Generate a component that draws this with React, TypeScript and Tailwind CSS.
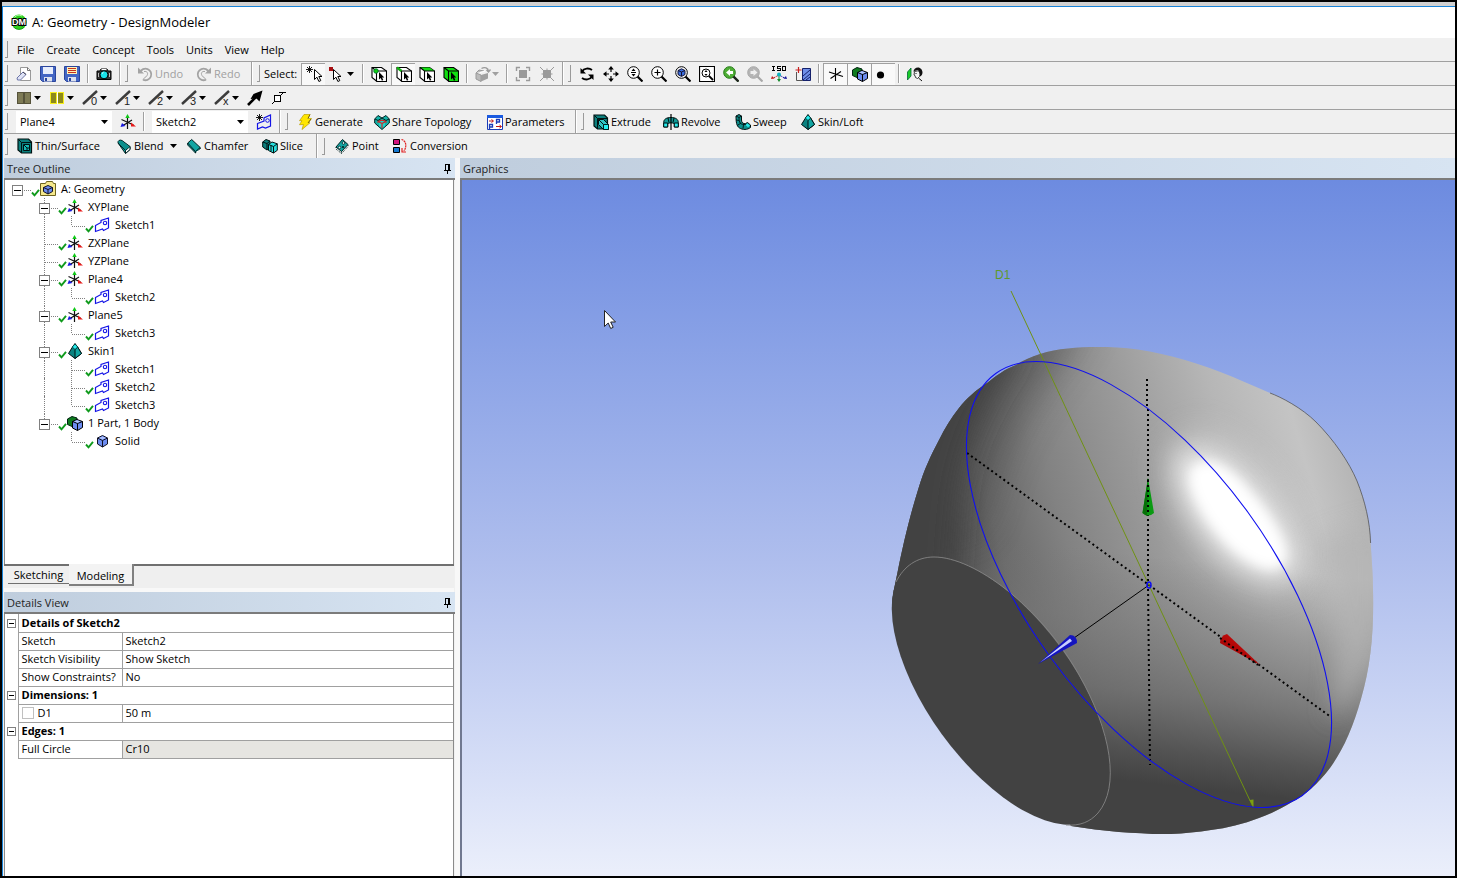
import React from "react";

type Kids = { children?: React.ReactNode };

/* ---------- drawing helpers ---------- */

function Ic({ children, w = 16, h = 16, crisp = false }: Kids & { w?: number; h?: number; crisp?: boolean }) {
  return (
    <svg
      width={w}
      height={h}
      viewBox={`0 0 ${w} ${h}`}
      fill="none"
      shapeRendering={crisp ? "crispEdges" : "auto"}
      className="block shrink-0"
      aria-hidden="true"
    >
      {children}
    </svg>
  );
}

const Caret = ({ color = "#000" }: { color?: string }) => (
  <svg width="7" height="4" viewBox="0 0 7 4" className="block shrink-0" aria-hidden="true">
    <path d="M0 0h7L3.5 4z" fill={color} />
  </svg>
);

const Logo = () => (
  <Ic>
    <circle cx="8" cy="8" r="7.600" fill="#2fd01f" />
    <path d="M2.500 13a7.500 7.500 0 0 0 11 0" stroke="#12a012" />
    <path d="M3.500 3.500A6 6 0 0 1 11 2" stroke="#b8f7b0" />
    <text
      x="8"
      y="11"
      textAnchor="middle"
      fontSize="9"
      fontWeight="bold"
      fontFamily="Liberation Sans, sans-serif"
      fill="#fff"
      stroke="#000"
      strokeWidth="2"
      paintOrder="stroke"
    >
      DM
    </text>
  </Ic>
);

const NewIcon = () => (
  <Ic>
    <path d="M4.500 1.500h7l3 3v10h-10z" fill="#fff" stroke="#999" />
    <path d="M11.500 1.500v3h3" stroke="#777" />
    <path d="M1 12l6-6 3 2.500-5.500 5.500H1.500z" fill="#dfe3f5" stroke="#6b74a8" />
    <path d="M7 6l3 2.500" stroke="#445" />
  </Ic>
);
const SaveIcon = ({ red = false }: { red?: boolean }) => (
  <Ic>
    <path d="M.5.5h15v15h-13l-2-2z" fill="#4466c4" stroke="#2a459c" />
    <path d="M3 1h10v7H3z" fill={red ? "#fff3b8" : "#e8eefc"} />
    {red && <path d="M4 2.500h8M4 4.500h8M4 6.500h8" stroke="#c8321e" />}
    <path d="M4 11h8v4.500H4z" fill="#dde2ee" />
    <path d="M5 12h2v3H5z" fill="#2a459c" />
  </Ic>
);
const CameraIcon = () => (
  <Ic>
    <path d="M1 5h3l1-2h6l1 2h3v8.500H1z" fill="#333" stroke="#000" />
    <path d="M5.500 3.500h5" stroke="#fff" />
    <path d="M2.500 7v4M13.500 7v4" stroke="#bbb" />
    <circle cx="8" cy="8.800" r="4" fill="#19e3ea" stroke="#000" />
    <path d="M6 7.500l1.500-1.200" stroke="#fff" />
  </Ic>
);
const UndoIcon = ({ flip = false }: { flip?: boolean }) => (
  <Ic>
    <g transform={flip ? "matrix(-1 0 0 1 16 0)" : undefined} stroke="#a3a3a3">
      <path d="M3 6.500A5.800 5.800 0 1 1 6 13.700" strokeWidth="1.800" />
      <path d="M1 1.500V7.500H7z" fill="#a3a3a3" stroke="none" />
      <path d="M7 5.500c3-.5 4.500 1.500 3 4s-3 2-4 4" strokeWidth="1" />
    </g>
  </Ic>
);
const Pointer = ({ x = 0, y = 0 }: { x?: number; y?: number }) => (
  <path transform={`translate(${x} ${y})`} d="M.5.5v10l2.400-2.300 2 4.300 1.900-.9-2-4.100h3.200z" fill="#fff" stroke="#000" />
);
const SelectNew = () => (
  <Ic>
    <path d="M3.500 0v7M0 3.500h7M1 1l5 5M6 1L1 6" stroke="#000" strokeWidth=".9" />
    <Pointer x={8} y={3} />
  </Ic>
);
const SelectMode = () => (
  <Ic>
    <path d="M0 1h4v4H0z" fill="#a80f12" />
    <Pointer x={4} y={3} />
  </Ic>
);
const CubeSelect = ({ kind }: { kind: "vertex" | "edge" | "face" | "body" }) => (
  <Ic>
    <path d="M1 1.500h9.500l5 3.500v10.500H6L1 11.500z" fill={kind === "body" ? "#12dd12" : "#fff"} stroke="#000" strokeWidth="1.100" />
    {kind === "face" && <path d="M1 1.500h9.500L15.500 5H5.500z" fill="#12dd12" />}
    <path d="M1 1.500L5.500 5h10M5.500 5v10.500" stroke="#000" strokeWidth="1.100" />
    {kind === "edge" && <path d="M1 1.500L5.500 5" stroke="#12b012" strokeWidth="2.500" />}
    {kind === "vertex" && <circle cx="5" cy="5" r="2.300" fill="#12cc12" stroke="#063" strokeWidth=".8" />}
    <path d="M8 6v7.500l1.700-1.500 1.200 2.700 1.400-.6-1.200-2.600h2.200z" fill="#000" />
  </Ic>
);
const GreyCube = () => (
  <Ic>
    <path d="M1 7l3-3 5 1M1 7v6l5 2.500V9z" fill="#bbb" stroke="#9a9a9a" />
    <path d="M6 9l7-2v5.500l-7 3z" fill="#a0a0a0" />
    <path d="M5 6.500l5-1.500" stroke="#fff" />
    <path d="M6.500 2.500c3-2 7-.5 7 3M11.500 4l2 2 2-2.500" stroke="#9a9a9a" strokeWidth="1.300" />
  </Ic>
);
const GreyBox = ({ cross = false }: { cross?: boolean }) => (
  <Ic>
    <path d="M4 4h8v8H4z" fill="#9a9a9a" />
    {cross ? (
      <path d="M1 1l4 4M15 1l-4 4M1 15l4-4M15 15l-4-4M2.500 8h11M8 2.500v11" stroke="#9a9a9a" />
    ) : (
      <path d="M1.500 5V1.500H5M11 1.500h3.500V5M14.500 11v3.500H11M5 14.500H1.500V11" stroke="#9a9a9a" strokeWidth="1.400" />
    )}
  </Ic>
);
const RotateIcon = () => (
  <Ic>
    <path d="M3 5.500C5 2 10 1.800 13 4M13 10.500c-2 3.500-7 3.700-10 1.500" stroke="#000" strokeWidth="1.900" />
    <path d="M1.500 2v5.500H7zM14.500 14V8.500H9z" fill="#000" />
  </Ic>
);
const PanIcon = () => (
  <Ic>
    <path d="M8 2v4M8 10v4M2 8h4M10 8h4" stroke="#000" strokeWidth="1.200" />
    <path d="M8 0l2.800 3.500H5.200zM8 16l2.800-3.500H5.200zM0 8l3.500-2.800v5.600zM16 8l-3.500-2.800v5.600z" fill="#000" />
  </Ic>
);
const Lens = ({ children, ring = "#000", fill = "#fff" }: Kids & { ring?: string; fill?: string }) => (
  <Ic>
    <path d="M10.500 10.500l5 5" stroke={ring} strokeWidth="2.200" />
    <circle cx="6.500" cy="6.500" r="5.800" fill={fill} stroke={ring} strokeWidth="1" />
    {children}
  </Ic>
);
const ZoomIcon = () => (
  <Lens>
    <path d="M6.500 2.500l2 2.500h-4zM6.500 10.500l2-2.500h-4z" fill="#000" />
    <path d="M4 6.500h5" stroke="#000" />
  </Lens>
);
const ZoomInIcon = () => (
  <Lens>
    <path d="M6.500 3.500v6M3.500 6.500h6" stroke="#000" strokeWidth="1.200" />
  </Lens>
);
const ZoomFitIcon = () => (
  <Lens>
    <path d="M3 4.500l3.500-1.700L10 4.500v4l-3.500 2L3 8.500z" fill="#3c6fe0" stroke="#113" />
    <path d="M3 4.500L6.500 6 10 4.500M6.500 6v4" stroke="#113" />
  </Lens>
);
const ZoomBoxIcon = () => (
  <Ic>
    <path d="M.5.5h15v15H.5z" fill="#fff" stroke="#000" strokeWidth="1.200" />
    <circle cx="7" cy="7" r="4" stroke="#000" />
    <path d="M10 10l4 4" stroke="#000" strokeWidth="1.800" />
    <path d="M7 4l1.500 2h-3zM7 10l1.500-2h-3z" fill="#000" />
  </Ic>
);
const PrevIcon = () => (
  <Lens ring="#217a12" fill="#4fae36">
    <path d="M10.500 10.500l5 5" stroke="#222" strokeWidth="2.200" />
    <path d="M3 6.500l4-3.500v2h3v3H7v2z" fill="#fff" />
  </Lens>
);
const NextIcon = () => (
  <Lens ring="#a8a8a8" fill="#b4b4b4">
    <path d="M10.500 6.500L6.500 3v2h-3v3h3v2z" fill="#eee" />
  </Lens>
);
const IsoIcon = () => (
  <Ic>
    <path
      d="M1 .5h3M2.500 .5v4M1 4.500h3M9.500 .5h-3v2h2.500v2H6M11.500 .5h3v4h-3z"
      stroke="#000"
      shapeRendering="crispEdges"
    />
    <path d="M8 9v5" stroke="#158a2a" />
    <path d="M6 13h4l-2 3z" fill="#158a2a" />
    <path d="M7 9.500L2.500 12" stroke="#c01818" strokeDasharray="2 1" />
    <path d="M0 13l1-3 2.500 2.500z" fill="#c01818" />
    <path d="M9 9.500l4.500 2.500" stroke="#14149c" strokeDasharray="2 1" />
    <path d="M16 13l-1-3-2.500 2.500z" fill="#14149c" />
    <circle cx="8" cy="8.500" r="2" fill="#0fb5c0" />
  </Ic>
);
const LookAtPlane = () => (
  <Ic>
    <path d="M7.500 2.500h8v12h-8z" fill="#6f8fe8" stroke="#15206b" />
    <path d="M8 10l7-6M8 14l7-6M11 14l4-3" stroke="#15206b" />
    <path d="M1.500 6v8.500h6" stroke="#555" />
    <path d="M3.500 1v6M.5 4h6" stroke="#c81e1e" strokeWidth="1.200" />
  </Ic>
);
const AxesMono = () => (
  <Ic>
    <path d="M7.500 2v13M1 6l14 4.500M2.500 12.500L13 5.500" stroke="#000" strokeWidth="1.100" />
  </Ic>
);
const PartBody = () => (
  <Ic>
    <path d="M.5 4L5 1.500l5 1.500v6L5 11.500l-4.500-2z" fill="#0e7a1e" stroke="#021" />
    <path d="M5.500 6.500L10 4.500l5.500 2v6l-5 3-5-2.500z" fill="#6c8cf0" stroke="#000" />
    <path d="M5.500 6.500l5 2 5-2M10.500 8.500v7" stroke="#000" />
    <path d="M7 6.300L10 5.200l3.500 1.300-3 1.200z" fill="#b4c8ff" />
  </Ic>
);
const DotIcon = () => (
  <Ic>
    <circle cx="4.500" cy="9" r="3.600" fill="#000" />
  </Ic>
);
const LookAt = () => (
  <Ic>
    <path d="M.5 6L4 2v8L.5 14z" fill="#18cc28" stroke="#063" strokeWidth=".8" />
    <path d="M6.500 6c0-3 2-4.500 4.500-4.500S15.500 4 15.500 6.500 14 10 13 10.500L11 4 7.500 5z" fill="#111" />
    <path d="M7.500 5.500c2 0 3-1 4-.5s2 3 1 5.500l-2 2-2-1-.5-2-1-.5z" fill="#f5f5f5" stroke="#111" strokeWidth=".8" />
    <path d="M8.500 7.500h1M11.500 12l3.500 3" stroke="#111" />
  </Ic>
);

/* edge colouring row */
const Blocks = ({ lit = false }: { lit?: boolean }) => (
  <Ic crisp>
    <path d="M1 2h14v12H1z" fill={lit ? "#f7ef18" : "#55523a"} />
    <path d="M2 3h5v10H2zM9 3h5v10H9z" fill={lit ? "#8d8a1c" : "#7d7a55"} />
    {lit && <path d="M8 2v12" stroke="#fff" />}
  </Ic>
);
const EdgeLine = ({ tag }: { tag: string }) => (
  <Ic>
    <path d="M1 14L15 1" stroke="#3c3c3c" strokeWidth="2.400" />
    <text x="9" y="15" fontSize="11" fontFamily="Liberation Sans, sans-serif" fill="#222">
      {tag}
    </text>
  </Ic>
);
const ThickArrow = () => (
  <Ic>
    <path d="M1 15L11 5" stroke="#000" strokeWidth="2.600" />
    <path d="M15.500 .5l-3 11L9.500 8.500 3.500 9 6.500 4z" fill="#000" />
  </Ic>
);
const BoxLine = () => (
  <Ic crisp>
    <path d="M3.500 5.500h6v6h-6z" stroke="#000" fill="#fff" />
    <path d="M9 6l4-4M8 2.500h7M1 14l3-3" stroke="#000" />
  </Ic>
);

/* feature icons */
const PlaneAxes = () => (
  <Ic>
    <path d="M7.500 3v12M1.500 5.500l12 5.500M3 11.500L12 6" stroke="#111" strokeWidth="1.200" />
    <path d="M7.500 0l2.200 4H5.300z" fill="#10c818" />
    <path d="M11 8.500l5 4h-5z" fill="#e81818" />
    <path d="M.5 13l1.500-4 3.500 3z" fill="#1818e0" />
  </Ic>
);
const SketchIcon = () => (
  <Ic>
    <path d="M1.500 8.500L7 5.500V3.500l7.500-2.500v10l-5 2.500-1-1.500-7 2.500z" stroke="#1414e6" strokeWidth="1.200" />
    <circle cx="11" cy="6" r="1.700" stroke="#1414e6" strokeWidth="1.100" />
  </Ic>
);
const NewSketchIcon = () => (
  <Ic>
    <path d="M1.500 9.500L8 7V4l6.500-3v11l-5 2-3-1-5 2z" stroke="#1414e6" strokeWidth="1.200" />
    <circle cx="11.500" cy="6.500" r="1.800" stroke="#1414e6" />
    <path d="M3.500 0v7M0 3.500h7M1 1l5 5M6 1L1 6" stroke="#000" strokeWidth=".9" />
  </Ic>
);
const Bolt = () => (
  <Ic>
    <path d="M7 .5l6-.2-2 4 3.500.2-3 4 1.500.3L5 15.500l1.500-5-4 .2 2.500-4H2.500z" fill="#ffe600" stroke="#b89c00" strokeWidth=".7" />
    <path d="M13 .5l-2 4M14 5l-3 4" stroke="#665500" strokeWidth=".8" />
  </Ic>
);
const ShareIcon = () => (
  <Ic>
    <path d="M.7 5L4 1.500 8 4l4-2.500L15.300 5v4L8 15.500.7 9z" fill="#13b3a8" stroke="#022" />
    <path d="M1 5l3 1.500L8 4l4 2.500L15 5" stroke="#022" />
    <path d="M5 8l3-1.500L11 8v4l-3 2-3-2z" fill="#1fd5cc" />
    <path d="M3.500 8.500C5 5.500 11 5.500 12.500 8.500M5 8l3 1.500L11 8M8 9.500V14" stroke="#e01818" strokeWidth="1.100" />
  </Ic>
);
const ParamIcon = () => (
  <Ic>
    <path d="M.5 1.500h15v14H.5z" fill="#fff" stroke="#1a3cb8" />
    <path d="M0 1h16v3H0z" fill="#1a5ae0" />
    <path d="M2 7h4M4.500 5.500L6.500 7 4.500 8.500M9 12.500h5M12.500 11l2 1.500-2 1.500" stroke="#c01818" />
    <path d="M9.500 10V5.500h3v2.500h-3M2.500 15v-4.500h3V13h-3" stroke="#1a3cb8" strokeWidth="1.300" />
  </Ic>
);
const ExtrudeIcon = ({ thin = false }: { thin?: boolean }) => (
  <Ic>
    <path d="M1 1h10.500l3 3v11H4.500L1 12z" fill="#0b7f7d" stroke="#011" strokeWidth="1.200" />
    <path d="M4.500 4.500h10v10.500" stroke="#011" />
    <path d="M1.500 1.500l3 3V15" stroke="#011" />
    {thin ? (
      <g>
        <path d="M6.500 6.500h6v6h-6z" fill="#13b9b5" stroke="#011" />
        <path d="M7 7l3 3h2.500M10 10v2.500" stroke="#011" />
      </g>
    ) : (
      <g>
        <path d="M5.500 5.500h5l5 5v5h-5l-5-5z" fill="#2fc4c4" stroke="#011" />
        <path d="M10.500 10.500h5v5h-5z" fill="#24f2f2" stroke="#022" />
        <path d="M5.500 5.500l5 5" stroke="#011" />
      </g>
    )}
  </Ic>
);
const RevolveIcon = () => (
  <Ic>
    <path d="M.7 8.500c0-3.500 3-5 7.300-5s7.300 1.500 7.300 5V13h-4v-3c0-1.500-6.600-1.500-6.600 0v3h-4z" fill="#109b98" stroke="#011" />
    <path d="M.7 9h4v4h-4zM11.300 9h4v4h-4z" fill="#27ecec" stroke="#011" />
    <path d="M5 4l1 4.500M11 4l-1 4.500" stroke="#011" />
    <path d="M8 0v16" stroke="#000" strokeWidth="1.200" />
  </Ic>
);
const SweepIcon = () => (
  <Ic>
    <path d="M1 2l3-1.500L6.500 2v4c0 3 2 4 4 3.500l2-1 3 2.500v2.500c-3 2.500-8 2.500-11 .5S1 8 1 2z" fill="#0d8f8c" stroke="#011" />
    <path d="M1 2l3 1.500L6.500 2M4 3.500c0 5 1 7.500 7 7M1.200 6l3 .5M3 11l3-2M8 14.500l.5-4" stroke="#011" strokeWidth=".9" />
    <path d="M10.500 11l2-1.500 2.500 2-2 1.800z" fill="#27ecec" />
  </Ic>
);
const SkinIcon = () => (
  <Ic>
    <path d="M8 .5l2.500 3.500 4 6.500L8 15.500l-6.500-5L5.500 4z" fill="#0b8280" stroke="#011" />
    <path d="M8 6.500L10.700 4l3.800 6.500L8 15.500z" fill="#12a5a2" stroke="#011" />
    <path d="M8 1l2.700 3L8 6.500 5.300 4z" fill="#27f0f0" stroke="#033" strokeWidth=".8" />
  </Ic>
);
const BlendIcon = () => (
  <Ic>
    <path d="M2 5C1.500 2.500 4 1.500 6 2.500L14 8.500v3L9.500 15.500z" fill="#12a5a2" stroke="#022" />
    <path d="M9.500 15.500V12.500L14 8.500v3z" fill="#fff" stroke="#022" />
    <path d="M2.200 5L9.500 12.500" stroke="#022" />
    <path d="M3 4l2-1.200 8.300 6-4 3z" fill="#0d8e8b" />
  </Ic>
);
const ChamferIcon = () => (
  <Ic>
    <path d="M1.700 5l4-3.500 8.500 8v1.500L9.500 15 1.700 7z" fill="#12a5a2" stroke="#022" />
    <path d="M1.700 5l7.800 8.500 4.700-4M9.500 13.500V15" stroke="#022" />
    <path d="M10 14.500l4.500-3" stroke="#fff" />
  </Ic>
);
const SliceIcon = () => (
  <Ic>
    <path d="M.7 4L4 1.500l4 1.500v7l-3 2-4.300-3z" fill="#0b7f7d" stroke="#011" />
    <path d="M.7 4L5 5.500 8 3M5 5.500V12" stroke="#011" />
    <path d="M6.500 6.500L10 4l5.300 1.800v6.500L11.500 15l-5-2.500z" fill="#27dede" stroke="#011" />
    <path d="M6.500 6.500l5 2 3.800-2.700M11.500 8.500V15M9 7.500v6" stroke="#011" />
  </Ic>
);
const PointIcon = () => (
  <Ic>
    <path d="M2 9L8.500 1.500 14 6.500 7.500 13.500z" fill="#12a5a2" stroke="#022" />
    <path d="M2 9v2l5.500 4.500v-2M7.500 15.500L14 8.500v-2" stroke="#022" strokeDasharray="1 1" />
    <circle cx="9.500" cy="5" r="1.300" fill="#e8ffff" stroke="#022" strokeWidth=".8" />
    <circle cx="5.500" cy="9.500" r="1.300" fill="#e8ffff" stroke="#022" strokeWidth=".8" />
    <circle cx="9" cy="9" r="1.100" fill="#022" />
  </Ic>
);
const ConversionIcon = () => (
  <Ic>
    <path d="M1.500 1.500h6v5h-6z" fill="#d0147c" stroke="#000" />
    <path d="M1.500 9.500h6v5h-6z" fill="#1478d0" stroke="#000" />
    <path d="M9.500 1.500c4 1 6 6 2.500 11.500" stroke="#e02020" strokeWidth="1.200" strokeDasharray="2 .6" />
    <path d="M10 10v4h4" stroke="#e02020" strokeWidth="1.200" />
  </Ic>
);

/* tree icons */
const FolderCube = () => (
  <Ic>
    <path d="M.5 2.500h5l1-2h6l1 2h2v12H.5z" fill="#f5e88c" stroke="#6e6420" />
    <path d="M3.500 6.500L8 4.500l4.500 2v4L8 13l-4.500-2.500z" fill="#6c8cf0" stroke="#112" />
    <path d="M3.500 6.500L8 8.500l4.500-2M8 8.500V13" stroke="#112" />
  </Ic>
);
const SolidCube = () => (
  <Ic>
    <path d="M3.500 5l5-2.500 5 2.500v6l-5 3-5-3z" fill="#6c8cf0" stroke="#112" />
    <path d="M3.500 5l5 2.500 5-2.500M8.500 7.500V14" stroke="#112" />
    <path d="M5 5l3.500-1.500L12 5 8.500 6.500z" fill="#a9bfff" />
  </Ic>
);
const Check = () => (
  <svg width="9" height="18" viewBox="0 0 9 18" className="block shrink-0" aria-hidden="true">
    <path d="M1 12.500l2.500 2.800L8 9.800" stroke="#0f9a1c" strokeWidth="1.900" fill="none" />
  </svg>
);
const Pin = () => (
  <Ic w={9} h={10} crisp>
    <path d="M2.500 6V.5h4V6M5.500 1v5M1 6.500h7M4.500 7v3" stroke="#000" />
  </Ic>
);

/* ---------- toolbar parts ---------- */

const Grip = () => (
  <span className="flex w-2 shrink-0 items-center pl-px">
    <span className="h-[17px] w-[3px] border-r border-b border-[#9a9a9a]" />
  </span>
);
const Sep = () => (
  <span className="flex w-2 shrink-0 justify-center py-[2px]">
    <span className="w-[2px] border-l border-[#a0a0a0] bg-white" />
  </span>
);
const GroupEnd = () => (
  <span className="flex w-2 shrink-0 justify-center">
    <span className="w-[2px] border-l border-[#a0a0a0] bg-white" />
  </span>
);
function Tool({
  label,
  children,
  pressed = false,
  drop = false,
  width = "w-6",
}: Kids & { label: string; pressed?: boolean; drop?: boolean; width?: string }) {
  return (
    <button
      type="button"
      aria-label={label}
      aria-pressed={pressed || undefined}
      className={`flex h-[22px] shrink-0 items-center gap-[2px] self-center ${drop ? "justify-start pl-1" : "justify-center"} ${width} ${
        pressed ? "border-t border-l border-[#a0a0a0] bg-[#f9f9f9]" : ""
      }`}
    >
      {children}
      {drop && <Caret />}
    </button>
  );
}
function Labeled({
  icon,
  children,
  width,
  disabled = false,
  drop = false,
}: Kids & { icon: React.ReactNode; width: string; disabled?: boolean; drop?: boolean }) {
  return (
    <button
      type="button"
      disabled={disabled}
      className={`flex shrink-0 items-center gap-[2px] pl-[5px] ${width} ${disabled ? "text-[#a0a0a0]" : ""}`}
    >
      {icon}
      <span className="whitespace-nowrap">{children}</span>
      {drop && (
        <span className="pl-1">
          <Caret />
        </span>
      )}
    </button>
  );
}
function Combo({ label, value }: { label: string; value: string }) {
  return (
    <span className="relative flex h-[22px] w-24 shrink-0 items-center self-center bg-white">
      <select
        aria-label={label}
        className="h-[22px] w-full appearance-none bg-transparent pt-px pl-1 text-[11px] leading-4 outline-none"
        defaultValue={value}
      >
        <option>{value}</option>
      </select>
      <span className="pointer-events-none absolute right-1">
        <Caret />
      </span>
    </span>
  );
}
const Bar = ({ children, last = false }: Kids & { last?: boolean }) => (
  <div role="toolbar" className={`flex h-6 shrink-0 bg-[#f0f0f0] ${last ? "" : "border-b border-[#a0a0a0]"}`}>
    {children}
  </div>
);

/* ---------- tree ---------- */

type Node = { level: number; text: string; icon: React.ReactNode; open?: boolean; end?: boolean; trunk?: boolean };

const nodes: Node[] = [
  { level: 0, text: "A: Geometry", icon: <FolderCube />, open: true },
  { level: 1, text: "XYPlane", icon: <PlaneAxes />, open: true },
  { level: 2, text: "Sketch1", icon: <SketchIcon />, end: true, trunk: true },
  { level: 1, text: "ZXPlane", icon: <PlaneAxes /> },
  { level: 1, text: "YZPlane", icon: <PlaneAxes /> },
  { level: 1, text: "Plane4", icon: <PlaneAxes />, open: true },
  { level: 2, text: "Sketch2", icon: <SketchIcon />, end: true, trunk: true },
  { level: 1, text: "Plane5", icon: <PlaneAxes />, open: true },
  { level: 2, text: "Sketch3", icon: <SketchIcon />, end: true, trunk: true },
  { level: 1, text: "Skin1", icon: <SkinIcon />, open: true },
  { level: 2, text: "Sketch1", icon: <SketchIcon />, trunk: true },
  { level: 2, text: "Sketch2", icon: <SketchIcon />, trunk: true },
  { level: 2, text: "Sketch3", icon: <SketchIcon />, end: true, trunk: true },
  { level: 1, text: "1 Part, 1 Body", icon: <PartBody />, open: true, end: true },
  { level: 2, text: "Solid", icon: <SolidCube />, end: true },
];

const ExpandBox = ({ name, small = false }: { name: string; small?: boolean }) => (
  <button
    type="button"
    aria-label={`Collapse ${name}`}
    className={`flex items-center justify-center border border-[#808080] bg-white ${small ? "size-[9px]" : "size-[11px]"}`}
  >
    <span className={`h-px bg-black ${small ? "w-[5px]" : "w-[7px]"}`} />
  </button>
);

function TreeRow({ node }: { node: Node }) {
  const { level, text, icon, open, end, trunk } = node;
  return (
    <li className="flex h-[18px] items-center">
      <span className={`flex h-full shrink-0 ${level === 0 ? "w-[7px]" : level === 1 ? "w-[34px]" : "w-[61px]"}`}>
        {level === 2 && trunk && <span className="ml-[39px] h-full w-px border-l border-dotted border-[#808080]" />}
      </span>
      <span className="grid h-full w-[19px] shrink-0 items-center">
        <svg width="19" height="18" className="block [grid-area:1/1]" shapeRendering="crispEdges" aria-hidden="true">
          <path
            d={`${level === 0 ? "" : `M5.500 0V${end ? 10 : 18}`}M5.500 10.500H19`}
            stroke="#808080"
            strokeDasharray="1 1"
            fill="none"
          />
        </svg>
        {open && (
          <span className="pt-[2px] [grid-area:1/1]">
            <ExpandBox name={text} />
          </span>
        )}
      </span>
      <Check />
      {icon}
      <span className="pl-[5px] whitespace-nowrap">{text}</span>
    </li>
  );
}

/* ---------- details ---------- */

type Detail = { group?: string; name?: string; value?: string; box?: boolean; readOnly?: boolean };
const details: Detail[] = [
  { group: "Details of Sketch2" },
  { name: "Sketch", value: "Sketch2" },
  { name: "Sketch Visibility", value: "Show Sketch" },
  { name: "Show Constraints?", value: "No" },
  { group: "Dimensions: 1" },
  { name: "D1", value: "50 m", box: true },
  { group: "Edges: 1" },
  { name: "Full Circle", value: "Cr10", readOnly: true },
];

const PanelTitle = ({ children, pin = false }: Kids & { pin?: boolean }) => (
  <div className="flex h-[22px] shrink-0 items-center justify-between border-b-2 border-[#7b7b7b] bg-linear-to-r from-[#bfcddd] to-[#d7e4f2] pt-[2px] pr-[3px] pl-[3px] text-[11px] text-[#1e1e1e]">
    <h2>{children}</h2>
    {pin && (
      <button type="button" aria-label="Auto hide">
        <Pin />
      </button>
    )}
  </div>
);

/* ---------- 3D view ---------- */

const RIM = "C1281 397 1302 408 1316 422C1334 440 1349 462 1357 481C1365 501 1370 522 1370.600 543";
const BODY = `M892 608C892 596 895 585 898 570C903 545 910 515 918.600 488C924 470 931 455 939 440C945 428 951 418 959 408C967 398 976 390 987 383C996 376 1005 369 1016 365C1024 360 1031 357 1040 354C1049 351 1058 349.500 1068 348.500C1078 347.300 1087 347 1097 347C1111 347 1124 347.500 1138 349.500C1154 352 1169 355.500 1185 360C1201 364.500 1217 370.500 1233 377C1245 382 1258 388 1270 393${RIM}C1371.500 558 1373 574 1373 590C1374 630 1371 665 1361 699C1353 728 1343 750 1330 768C1318 784 1305 795 1292 802C1281 809 1270 814 1259 818C1243 824 1227 828 1211 830C1198 832 1184 833.500 1171 834C1154 834.500 1136 833 1119 832C1103 830.500 1087 828.500 1071 826L1001 691Z`;

function Scene() {
  return (
    <svg
      className="block h-full w-full"
      viewBox="461 180 994 696"
      preserveAspectRatio="xMaxYMin slice"
      role="img"
      aria-label="Lofted solid with sketch circle and plane axes"
    >
      <defs>
        <linearGradient id="base" gradientUnits="userSpaceOnUse" x1="915" y1="560" x2="1370" y2="430">
          <stop offset="0" stopColor="#424242" />
          <stop offset=".08" stopColor="#464646" />
          <stop offset=".18" stopColor="#6a6a6a" />
          <stop offset=".32" stopColor="#828282" />
          <stop offset=".5" stopColor="#999" />
          <stop offset=".7" stopColor="#b6b6b6" />
          <stop offset=".85" stopColor="#c4c4c4" />
          <stop offset="1" stopColor="#acacac" />
        </linearGradient>
        <linearGradient id="under" gradientUnits="userSpaceOnUse" x1="1190" y1="560" x2="1165" y2="785">
          <stop offset="0" stopColor="#787878" stopOpacity="0" />
          <stop offset=".3" stopColor="#787878" stopOpacity=".5" />
          <stop offset=".6" stopColor="#6a6a6a" stopOpacity=".8" />
          <stop offset=".85" stopColor="#505050" stopOpacity=".95" />
          <stop offset="1" stopColor="#424242" />
        </linearGradient>
        <clipPath id="bodyClip">
          <path d={BODY} />
        </clipPath>
        <filter id="b6" x="-50%" y="-50%" width="200%" height="200%">
          <feGaussianBlur stdDeviation="6" />
        </filter>
        <filter id="b12" x="-50%" y="-50%" width="200%" height="200%">
          <feGaussianBlur stdDeviation="12" />
        </filter>
        <filter id="b18" x="-50%" y="-50%" width="200%" height="200%">
          <feGaussianBlur stdDeviation="18" />
        </filter>
        <linearGradient id="red" x1="0" y1="1" x2="1" y2="0">
          <stop offset="0" stopColor="#8a0000" />
          <stop offset="1" stopColor="#e01010" />
        </linearGradient>
      </defs>

      <path d={BODY} fill="url(#base)" />
      <g clipPath="url(#bodyClip)">
        <rect x="880" y="340" width="500" height="500" fill="url(#under)" />
        <path d="M1090 320L1040 390C1010 430 995 480 980 530L940 540L940 320Z" fill="#505050" opacity=".65" filter="url(#b18)" />
        <path d="M950 610C955 560 955 500 966 460C976 425 992 395 1020 352L930 330L820 620Z" fill="#424242" filter="url(#b12)" />
        <path d="M1315 540C1335 600 1342 660 1330 720L1350 700L1380 640V520Z" fill="#b4b4b4" opacity=".7" filter="url(#b12)" />
        <ellipse cx="1235" cy="512" rx="88" ry="42" transform="rotate(52 1235 512)" fill="#e6e6e6" opacity=".65" filter="url(#b18)" />
        <path d="M1176 460C1186 440 1216 450 1246 482C1272 510 1300 550 1296 566C1288 584 1256 574 1230 558C1200 536 1168 486 1176 460Z" fill="#f4f4f4" opacity=".6" filter="url(#b12)" />
        <path d="M1190 471C1200 454 1222 460 1244 484C1266 508 1288 540 1286 558C1280 576 1258 570 1236 553C1212 533 1184 492 1190 471Z" fill="#fff" filter="url(#b6)" />
      </g>
      <path d={`M1270 393${RIM}`} fill="none" stroke="#555" strokeWidth=".8" />

      <ellipse cx="1001.300" cy="691" rx="156.500" ry="73.500" transform="rotate(54 1001.300 691)" fill="#424242" />
      <path d="M896 582C904 566 917 557 934 557C975 557 1040 607 1078 673C1112 732 1120 787 1098 813C1090 822 1080 826 1066 825" fill="none" stroke="#858585" strokeWidth=".9" />

      <g stroke="#000" strokeWidth="2" strokeDasharray="2 3">
        <path d="M1147 379V406M1148 409V585L1150 765" fill="none" />
        <path d="M967 453L1331 717" />
      </g>
      <path d="M1149 585L1074 638" stroke="#000" />

      <path d="M1148 478L1142.500 513Q1148 518 1154 513Z" fill="#0a9a12" />
      <path d="M1148 478L1142.500 513Q1145 515 1147 516Z" fill="#067008" />
      <path d="M1260 665L1220 643Q1220 636 1227 634Z" fill="url(#red)" />
      <path d="M1220 638L1258 665" stroke="#000" strokeWidth="2" strokeDasharray="2 3" />
      <path d="M1148 480V514" stroke="#000" strokeWidth="2" strokeDasharray="2 3" />

      <path d="M1011 291L1253 807" stroke="#6f9212" fill="none" />
      <path d="M1249.500 800l4 7.500v-8z" fill="#7da010" />
      <ellipse cx="1149" cy="584.500" rx="260.800" ry="122.500" transform="rotate(54 1149 584.500)" fill="none" stroke="#1010f0" strokeWidth="1.100" />
      <path d="M1038 664L1070 635Q1077 635 1077 643Z" fill="#1414c0" />
      <path d="M1040 662.500L1070 638.500L1072 641Z" fill="#c8ceff" />
      <ellipse cx="1149" cy="585" rx="2" ry="3" fill="none" stroke="#1010f0" strokeWidth="1.500" />
      <text x="995" y="279" fontSize="12" fontFamily="Liberation Sans, Arial, sans-serif" fill="#5f9a2a">
        D1
      </text>

      <path d="M604.500 310.500v16l3.700-3.500 2.500 5.500 2.500-1.200-2.500-5.300h4.800z" fill="#fff" stroke="#222" />
    </svg>
  );
}

/* ---------- page ---------- */

export default function App() {
  return (
    <div className="flex h-screen flex-col overflow-hidden border-2 border-black bg-[#d0d0d0] pt-1 font-['Open_Sans','Noto_Sans',sans-serif] text-[11px] leading-4 text-black">
      <div className="flex min-h-0 flex-1 flex-col border-t border-l border-[#1883d7] bg-[#f0f0f0]">
        <header className="flex h-[31px] shrink-0 items-center gap-[5px] bg-white pb-px pl-2 text-[13px]">
          <Logo />
          <h1>A: Geometry - DesignModeler</h1>
        </header>

        <div className="flex min-h-0 flex-1 flex-col pl-px">
          <nav className="flex h-6 shrink-0 items-stretch border-b border-[#a0a0a0]">
            <Grip />
            <div className="flex items-center gap-3 pl-[5px]">
              {["File", "Create", "Concept", "Tools", "Units", "View", "Help"].map((m) => (
                <button type="button" key={m}>
                  {m}
                </button>
              ))}
            </div>
          </nav>

          <Bar>
            <Grip />
            <Tool label="New"><NewIcon /></Tool>
            <Tool label="Save"><SaveIcon /></Tool>
            <Tool label="Save as"><SaveIcon red /></Tool>
            <Sep />
            <Tool label="Image capture"><CameraIcon /></Tool>
            <GroupEnd />
            <Grip />
            <Labeled icon={<UndoIcon />} width="w-[59px]" disabled>Undo</Labeled>
            <Labeled icon={<UndoIcon flip />} width="w-[57px]" disabled>Redo</Labeled>
            <GroupEnd />
            <Grip />
            <span className="w-[37px] shrink-0 self-center">Select:</span>
            <Tool label="New selection" pressed><SelectNew /></Tool>
            <Tool label="Select mode" drop width="w-[34px]"><SelectMode /></Tool>
            <Sep />
            <Tool label="Points"><CubeSelect kind="vertex" /></Tool>
            <Tool label="Edges" pressed><CubeSelect kind="edge" /></Tool>
            <Tool label="Faces"><CubeSelect kind="face" /></Tool>
            <Tool label="Bodies"><CubeSelect kind="body" /></Tool>
            <Sep />
            <button type="button" disabled aria-label="Extend selection" className="flex w-8 shrink-0 items-center justify-center gap-px">
              <GreyCube />
              <Caret color="#a0a0a0" />
            </button>
            <Sep />
            <Tool label="Expand selection"><GreyBox /></Tool>
            <Tool label="Shrink selection"><GreyBox cross /></Tool>
            <GroupEnd />
            <Grip />
            <Tool label="Rotate"><RotateIcon /></Tool>
            <Tool label="Pan"><PanIcon /></Tool>
            <Tool label="Zoom"><ZoomIcon /></Tool>
            <Tool label="Box zoom"><ZoomInIcon /></Tool>
            <Tool label="Zoom to fit"><ZoomFitIcon /></Tool>
            <Tool label="Magnifier"><ZoomBoxIcon /></Tool>
            <Tool label="Previous view"><PrevIcon /></Tool>
            <Tool label="Next view"><NextIcon /></Tool>
            <Tool label="Isometric view"><IsoIcon /></Tool>
            <Tool label="Look at plane"><LookAtPlane /></Tool>
            <Sep />
            <Tool label="Display plane" pressed><AxesMono /></Tool>
            <Tool label="Display model" pressed><PartBody /></Tool>
            <Tool label="Display points" pressed><DotIcon /></Tool>
            <Sep />
            <Tool label="Look at"><LookAt /></Tool>
          </Bar>

          <Bar>
            <Grip />
            <Tool label="Face color" drop width="w-[33px]"><Blocks /></Tool>
            <Tool label="Edge color" drop width="w-[33px]"><Blocks lit /></Tool>
            {["0", "1", "2", "3", "x"].map((t) => (
              <Tool key={t} label={`Edges joint ${t}`} drop width="w-[33px]">
                <EdgeLine tag={t} />
              </Tool>
            ))}
            <Tool label="Edge direction"><ThickArrow /></Tool>
            <Tool label="Vertices"><BoxLine /></Tool>
          </Bar>

          <Bar>
            <Grip />
            <span className="w-1 shrink-0" />
            <Combo label="Active plane" value="Plane4" />
            <span className="w-1 shrink-0" />
            <Tool label="New plane"><PlaneAxes /></Tool>
            <Sep />
            <span className="w-1 shrink-0" />
            <Combo label="Active sketch" value="Sketch2" />
            <span className="w-1 shrink-0" />
            <Tool label="New sketch"><NewSketchIcon /></Tool>
            <GroupEnd />
            <Grip />
            <Labeled icon={<Bolt />} width="w-[77px]">Generate</Labeled>
            <Labeled icon={<ShareIcon />} width="w-[113px]">Share Topology</Labeled>
            <Labeled icon={<ParamIcon />} width="w-[90px]">Parameters</Labeled>
            <GroupEnd />
            <Grip />
            <Labeled icon={<ExtrudeIcon />} width="w-[70px]">Extrude</Labeled>
            <Labeled icon={<RevolveIcon />} width="w-[72px]">Revolve</Labeled>
            <Labeled icon={<SweepIcon />} width="w-[65px]">Sweep</Labeled>
            <Labeled icon={<SkinIcon />} width="w-[70px]">Skin/Loft</Labeled>
          </Bar>

          <Bar last>
            <Grip />
            <Labeled icon={<ExtrudeIcon thin />} width="w-[99px]">Thin/Surface</Labeled>
            <Labeled icon={<BlendIcon />} width="w-[70px]" drop>Blend</Labeled>
            <Labeled icon={<ChamferIcon />} width="w-[76px]">Chamfer</Labeled>
            <Labeled icon={<SliceIcon />} width="w-[56px]">Slice</Labeled>
            <GroupEnd />
            <Grip />
            <Labeled icon={<PointIcon />} width="w-[58px]">Point</Labeled>
            <Labeled icon={<ConversionIcon />} width="w-[80px]">Conversion</Labeled>
          </Bar>

          <main className="flex min-h-0 flex-1">
            <div className="flex w-[451px] shrink-0 flex-col">
              <PanelTitle pin>Tree Outline</PanelTitle>
              <div className="mr-px h-[384px] shrink-0 overflow-hidden border-r border-l border-[#8a8a8a] bg-white">
                <ul>
                  {nodes.map((n, i) => (
                    <TreeRow key={i} node={n} />
                  ))}
                </ul>
              </div>
              <div role="tablist" className="mr-px flex h-7 shrink-0 items-start border-b-4 border-[#f8f8f8] bg-[#efefef]">
                <span className="h-[2px] w-1 bg-[#707070]" />
                <button role="tab" aria-selected={false} type="button" className="h-5 w-[61px] border-t-2 border-b border-[#707070] pt-px text-center">
                  Sketching
                </button>
                <button role="tab" aria-selected type="button" className="h-[22px] w-[65px] border-r-2 border-b-2 border-[#808080] bg-[#f3f3f3] pt-1">
                  Modeling
                </button>
                <span className="h-[2px] flex-1 bg-[#707070]" />
              </div>
              <PanelTitle pin>Details View</PanelTitle>
              <div className="mr-px min-h-0 flex-1 border-r border-l border-[#8a8a8a] bg-white">
                <table className="w-full table-fixed border-collapse">
                  <colgroup>
                    <col className="w-[13px]" />
                    <col className="w-[104px]" />
                    <col />
                  </colgroup>
                  <tbody>
                    {details.map((d, i) =>
                      d.group ? (
                        <tr key={i} className="h-[18px]">
                          <td className="p-0 pl-[2px]">
                            <ExpandBox name={d.group} small />
                          </td>
                          <th colSpan={2} scope="colgroup" className="border-b border-l border-[#a0a0a0] p-0 pl-[3px] text-left font-bold">
                            {d.group}
                          </th>
                        </tr>
                      ) : (
                        <tr key={i} className="h-[18px]">
                          <td className="p-0" />
                          <th scope="row" className="border-b border-l border-[#a0a0a0] p-0 pl-[3px] text-left font-normal whitespace-nowrap">
                            {d.box ? (
                              <label className="flex items-center gap-1">
                                <input type="checkbox" className="size-3 appearance-none border border-[#c0c0c0] bg-white" />
                                {d.name}
                              </label>
                            ) : (
                              d.name
                            )}
                          </th>
                          <td className={`border-b border-l border-[#a0a0a0] p-0 pl-[3px] ${d.readOnly ? "bg-[#e6e5e1]" : ""}`}>{d.value}</td>
                        </tr>
                      ),
                    )}
                  </tbody>
                </table>
              </div>
            </div>
            <div className="w-[5px] shrink-0 bg-[#f8f8f8]" />
            <section className="flex min-w-0 flex-1 flex-col">
              <PanelTitle>Graphics</PanelTitle>
              <div className="min-h-0 flex-1 border-l-2 border-[#707890] bg-linear-to-b from-[#6d8be0] via-[#afbeed] via-55% to-[#ebeffb]">
                <Scene />
              </div>
            </section>
          </main>
        </div>
      </div>
    </div>
  );
}
